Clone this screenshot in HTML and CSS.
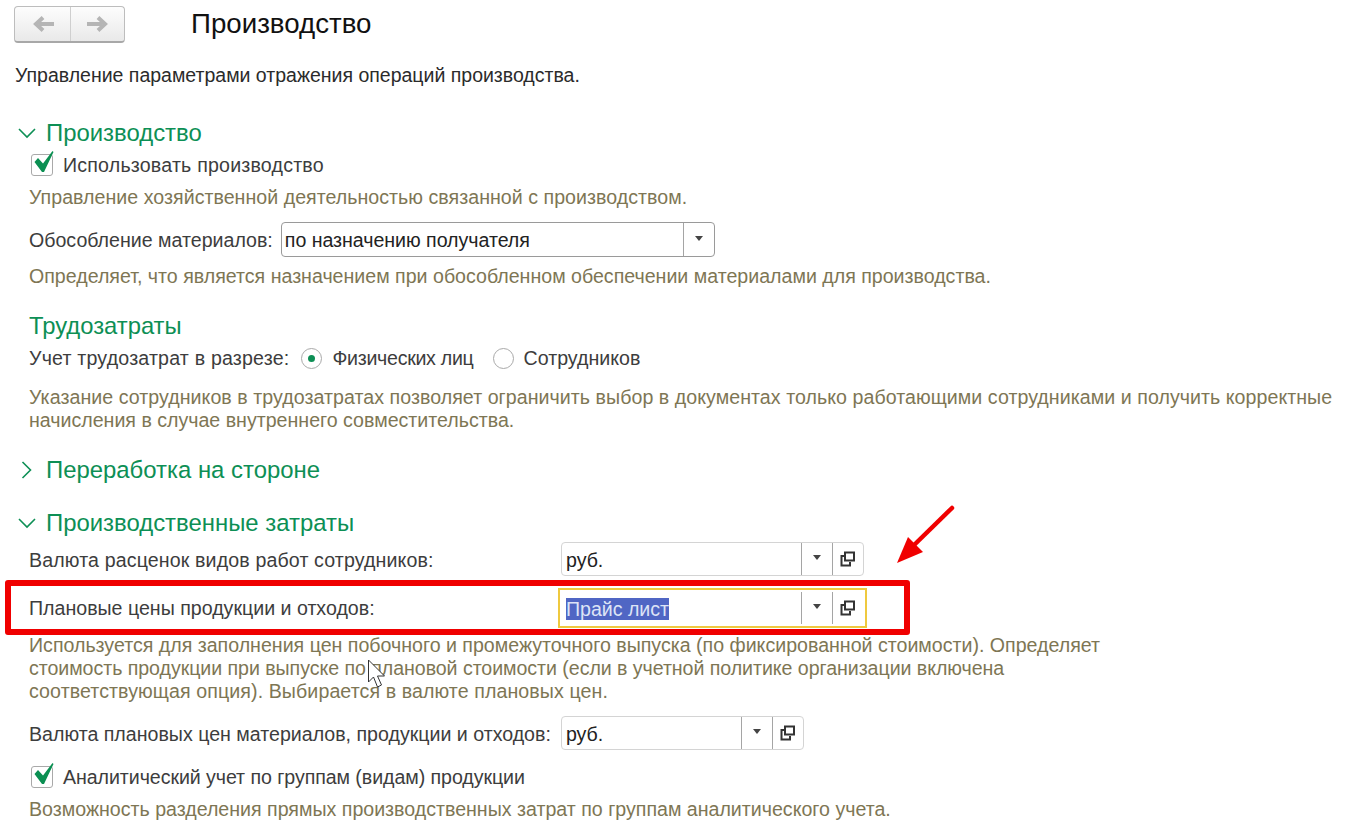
FILE: index.html
```html
<!DOCTYPE html>
<html lang="ru">
<head>
<meta charset="utf-8">
<title>Производство</title>
<link rel="stylesheet" href="styles.css">
</head>
<body>
<header class="top">
  <div class="nav">
    <button class="nav-btn"><svg width="26" height="18" viewBox="0 0 26 18"><path d="M24 9H9M9 9h2M13 2.500L6 9l7 6.500" fill="none" stroke="#b5b5b5" stroke-width="4"/></svg></button>
    <button class="nav-btn"><svg width="26" height="18" viewBox="0 0 26 18"><path d="M2 9h15M13 2.500L20 9l-7 6.500" fill="none" stroke="#b5b5b5" stroke-width="4"/></svg></button>
  </div>
  <h1 class="title">Производство</h1>
</header>
<p class="lead">Управление параметрами отражения операций производства.</p>

<section class="group first">
  <h2 class="gh"><svg class="chev" width="18" height="18" viewBox="0 0 18 18"><path d="M1 5l8 8 8-8" fill="none" stroke="#0d8f55" stroke-width="1.600"/></svg>Производство</h2>
  <div class="check c1"><span class="box"><svg width="24" height="26" viewBox="0 0 24 26"><path d="M3.500 14L7 10l5 5.500L21.500 3l1 1L13 24h-2z" fill="#0b8f52"/></svg></span>Использовать производство</div>
  <p class="hint h1">Управление хозяйственной деятельностью связанной с производством.</p>
  <div class="row r-sep">
    <label class="lbl">Обособление материалов:</label>
    <div class="field f-sep strong"><span class="val">по назначению получателя</span><span class="cell"><i class="tri"></i></span></div>
  </div>
  <p class="hint h2">Определяет, что является назначением при обособленном обеспечении материалами для производства.</p>
  <h3 class="sub">Трудозатраты</h3>
  <div class="row r-radio">
    <span class="lbl l-radio">Учет трудозатрат в разрезе:</span>
    <span class="radio on"></span><span class="opt o1">Физических лиц</span>
    <span class="radio"></span><span class="opt">Сотрудников</span>
  </div>
  <p class="hint h3"><span class="ls-a">Указание сотрудников в трудозатратах позволяет ограничить выбор в документах только работающими сотрудниками и получить корректные</span><br>начисления в случае внутреннего совместительства.</p>
</section>

<h2 class="gh closed"><svg class="chev" width="18" height="18" viewBox="0 0 18 18"><path d="M4.500 1l8 8-8 8" fill="none" stroke="#0d8f55" stroke-width="1.600"/></svg>Переработка на стороне</h2>

<section class="group costs">
  <h2 class="gh"><svg class="chev" width="18" height="18" viewBox="0 0 18 18"><path d="M1 5l8 8 8-8" fill="none" stroke="#0d8f55" stroke-width="1.600"/></svg>Производственные затраты</h2>
  <div class="row r-cur">
    <label class="lbl wide l-cur">Валюта расценок видов работ сотрудников:</label>
    <div class="field f-cur"><span class="val">руб.</span><span class="cell"><i class="tri"></i></span><span class="cell"><svg class="open" width="16" height="16" viewBox="0 0 16 16"><path d="M5 1.500h9V9.500H5zM4.500 5H1.500V14.500H10V11" fill="none" stroke="#333" stroke-width="2"/></svg></span></div>
  </div>
  <div class="row r-plan">
    <label class="lbl wide">Плановые цены продукции и отходов:</label>
    <div class="field f-plan"><span class="val"><span class="sel">Прайс лист</span></span><span class="cell"><i class="tri"></i></span><span class="cell"><svg class="open" width="16" height="16" viewBox="0 0 16 16"><path d="M5 1.500h9V9.500H5zM4.500 5H1.500V14.500H10V11" fill="none" stroke="#333" stroke-width="2"/></svg></span></div>
  </div>
  <p class="hint h4">Используется для заполнения цен побочного и промежуточного выпуска (по фиксированной стоимости). Определяет<br><span class="ls-b">стоимость продукции при выпуске по плановой стоимости (если в учетной политике организации включена</span><br><span class="ls-c">соответствующая опция). Выбирается в валюте плановых цен.</span></p>
  <div class="row r-cur2">
    <label class="lbl">Валюта плановых цен материалов, продукции и отходов:</label>
    <div class="field f-cur2"><span class="val">руб.</span><span class="cell"><i class="tri"></i></span><span class="cell"><svg class="open" width="16" height="16" viewBox="0 0 16 16"><path d="M5 1.500h9V9.500H5zM4.500 5H1.500V14.500H10V11" fill="none" stroke="#333" stroke-width="2"/></svg></span></div>
  </div>
  <div class="check c2"><span class="box"><svg width="24" height="26" viewBox="0 0 24 26"><path d="M3.500 14L7 10l5 5.500L21.500 3l1 1L13 24h-2z" fill="#0b8f52"/></svg></span>Аналитический учет по группам (видам) продукции</div>
  <p class="hint h5">Возможность разделения прямых производственных затрат по группам аналитического учета.</p>
</section>

<div class="redbox"></div>
<svg class="arrow" width="70" height="70" viewBox="0 0 70 70"><path d="M60 5L18 46" stroke="#f00000" stroke-width="4.500" stroke-linecap="round" fill="none"/><path d="M5 60l11-26 15 15z" fill="#f00000"/></svg>
<svg class="cursor" width="22" height="30" viewBox="0 0 22 30"><path d="M1.500 1v22l5-5 4 10 4-2-4-9h7z" fill="#fff" stroke="#333" stroke-width="1"/></svg>
</body>
</html>
```
FILE: styles.css
```css
* { box-sizing: border-box; }
html, body { margin: 0; padding: 0; }
body {
  width: 1346px; height: 839px; overflow: hidden; position: relative;
  background: #fff; color: #3d3d3d;
  font-family: "Liberation Sans", Arial, sans-serif; font-size: 19.600px; line-height: 23px;
}
p, h1, h2, h3 { margin: 0; font-weight: 400; }
.top { display: flex; align-items: center; height: 48px; padding: 0 0 0 14px; }
.nav {
  display: flex; width: 111px; height: 37px; margin-top: 0;
  border: 1px solid #bdbdbd; border-bottom: 2px solid #a8a8a8; border-radius: 4px;
  background: linear-gradient(#fdfdfd, #e9e9e9);
}
.nav-btn { flex: 1; padding: 0; border: 0; background: none; display: flex; align-items: center; justify-content: center; }
.nav-btn:first-child { flex: none; width: 55px; }
.nav-btn + .nav-btn { border-left: 1px solid #cfcfcf; }
.title { margin-left: 66px; font-size: 27.700px; line-height: 32px; color: #111; }
.lead { margin: 16px 0 0 15px; font-size: 19.500px; color: #2b2b2b; }
.gh { display: flex; align-items: center; height: 28px; padding-left: 18px; font-size: 23.900px; line-height: 28px; color: #0d8f55; }
.chev { margin-right: 10px; flex: none; }
.first { margin-top: 32px; }
.closed { margin-top: 24px; }
.costs { margin-top: 25px; }
.check { display: flex; align-items: center; height: 28px; padding-left: 31px; margin-top: 4px; }
.c1 { letter-spacing: .2px; }
.box { position: relative; display: block; width: 22px; height: 22px; margin-right: 10px; border: 1px solid #a9a9a9; border-radius: 3px; background: #fff; }
.box svg { position: absolute; left: -1px; top: -7px; }
.hint { padding-left: 29px; color: #7e7654; }
.h1 { margin-top: 7px; letter-spacing: .03px; }
.row { display: flex; align-items: center; padding-left: 29px; }
.r-sep { margin-top: 13px; height: 35px; }
.lbl { color: #3d3d3d; white-space: nowrap; }
.r-sep .lbl, .r-cur .lbl, .r-cur2 .lbl { padding-top: 2px; }
.l-radio { letter-spacing: .19px; }
.l-cur { letter-spacing: .13px; }
.field { display: flex; height: 34px; background: #fff; border: 1px solid #d4d4d4; border-radius: 4px; }
.field.strong { border-color: #9a9a9a; }
.val { flex: 1; padding-left: 4px; line-height: 35px; color: #222; white-space: nowrap; letter-spacing: -.03px; }
.f-sep .val { padding-left: 3px; }
.cell { position: relative; flex: none; width: 31px; display: flex; align-items: center; justify-content: center; border-left: 1px solid #a5a5a5; }
.tri { display: block; width: 0; height: 0; border: 4px solid transparent; border-top: 5px solid #444; border-bottom: 0; margin-top: -3px; }
.f-sep { width: 434px; height: 35px; margin-left: 8px; }
.h2 { margin-top: 8px; }
.sub { margin: 24px 0 0 29px; font-size: 23.800px; line-height: 28px; color: #0d8f55; }
.r-radio { margin-top: 5px; height: 26px; }
.radio { display: block; flex: none; position: relative; width: 21px; height: 21px; margin-left: 12px; margin-right: 10px; border: 1px solid #a9a9a9; border-radius: 50%; background: #fff; }
.radio.on::after { content: ""; position: absolute; left: 6px; top: 6px; width: 7px; height: 7px; border-radius: 50%; background: #0d8f55; }
.opt { color: #3d3d3d; white-space: nowrap; }
.o1 { letter-spacing: -.28px; }
.opt + .radio { margin-left: 19px; }
.h3 { margin-top: 15px; }
.ls-a { letter-spacing: .05px; }
.ls-b { letter-spacing: -.05px; }
.ls-c { letter-spacing: .09px; }
.wide { width: 532px; }
.r-cur { margin-top: 5px; height: 34px; }
.f-cur { width: 303px; }
.r-plan { margin-top: 12px; height: 40px; }
.f-plan { width: 309px; height: 40px; margin-left: -3px; border: 2px solid #efc93f; border-radius: 0; padding-right: 2px; }
.f-plan .cell { height: 32px; margin-top: 2px; }
.f-plan .val { padding-left: 6px; line-height: 38px; }
.sel { background: #5066c4; color: #dde4f6; }
.h4 { margin-top: 6px; }
.r-cur2 { margin-top: 13px; height: 34px; }
.f-cur2 { width: 243px; margin-left: 10px; }
.c2 { margin-top: 13px; letter-spacing: -.06px; }
.h5 { margin-top: 7px; }
.redbox { position: absolute; left: 5px; top: 580px; width: 905px; height: 55px; border: 6px solid #f00000; border-radius: 3px; }
.arrow { position: absolute; left: 892px; top: 503px; }
.cursor { position: absolute; left: 367px; top: 659px; }
```
